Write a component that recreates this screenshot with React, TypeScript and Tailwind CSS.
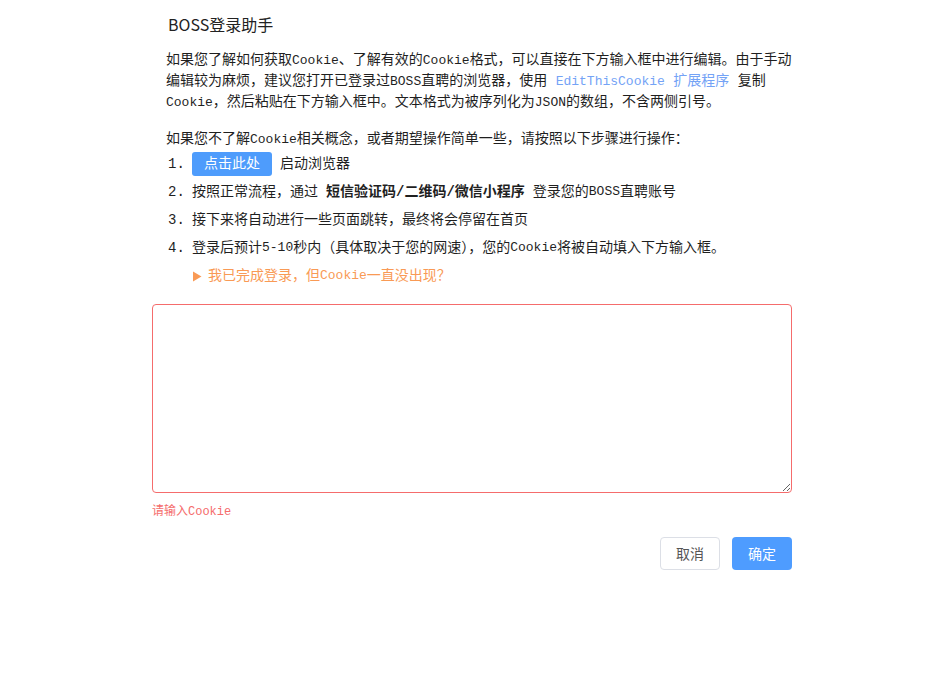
import type { ReactNode } from "react";

const mono = "font-['Liberation_Mono','Noto_Sans_CJK_SC',monospace]";

// latin runs in the reference are a touch narrower than the CJK glyphs
function L({ children }: { children: ReactNode }) {
  return <span className="text-[13px]">{children}</span>;
}

function Step({ n, children }: { n: number; children: ReactNode }) {
  return (
    <li className="flex h-[28px] items-center">
      <span className="w-6 shrink-0">{n}.</span>
      <div className="flex items-center">{children}</div>
    </li>
  );
}

export default function App() {
  return (
    <div className="h-[681px] w-full bg-white">
      <div className={`mx-auto w-[640px] text-[14px] text-[#1f1f1f] ${mono}`}>
        <h1 className="pl-4 pt-3 text-[16px] leading-6 font-normal font-['Noto_Sans_CJK_SC','Noto_Sans',sans-serif] text-[#222]">
          BOSS登录助手
        </h1>

        <p className="mt-[14px] pl-[14px] leading-[21px]">
          如果您了解如何获取<L>Cookie</L>、了解有效的<L>Cookie</L>格式，可以直接在下方输入框中进行编辑。由于手动编辑较为麻烦，建议您打开已登录过<L>BOSS</L>直聘的浏览器，使用{" "}
          <a className="cursor-pointer text-[#74a3f6]">
            <L>EditThisCookie</L> 扩展程序
          </a>{" "}
          复制<L>Cookie</L>，然后粘贴在下方输入框中。文本格式为被序列化为<L>JSON</L>的数组，不含两侧引号。
        </p>

        <p className="mt-4 pl-[14px] leading-[21px]">
          如果您不了解<L>Cookie</L>相关概念，或者期望操作简单一些，请按照以下步骤进行操作：
        </p>

        <ol className="pl-4">
          <Step n={1}>
            <button className="mr-2 h-[24px] w-[80px] rounded-[3px] bg-[#4e9cfc] text-[14px] text-white">
              点击此处
            </button>
            启动浏览器
          </Step>
          <Step n={2}>
            按照正常流程，通过 <b className="mx-2 font-bold">短信验证码/二维码/微信小程序</b> 登录您的<L>BOSS</L>直聘账号
          </Step>
          <Step n={3}>接下来将自动进行一些页面跳转，最终将会停留在首页</Step>
          <Step n={4}>
            登录后预计<L>5-10</L>秒内（具体取决于您的网速），您的<L>Cookie</L>将被自动填入下方输入框。
          </Step>
          <li className="flex h-[28px] items-center pl-6 text-[#f99a55]">
            <svg width="10" height="11" viewBox="0 0 10 11" className="mr-[6px]">
              <path d="M1 0.5 L9.5 5.5 L1 10.5 Z" fill="#f99a55" />
            </svg>
            我已完成登录，但<L>Cookie</L>一直没出现？
          </li>
        </ol>

        <textarea className="mt-[14px] block h-[189px] w-full resize-y rounded-[4px] border border-[#f56c6c] px-3 py-2 outline-none" />
        <div className="mt-3 text-[12px] leading-[14px] text-[#f56c6c]">
          请输入<span className="text-[12px]">Cookie</span>
        </div>

        <div className="mt-[18px] flex justify-end gap-3 font-['Noto_Sans_CJK_SC',sans-serif]">
          <button className="h-[33px] w-[60px] rounded-[4px] border border-[#dcdfe6] bg-white text-[14px] text-[#555]">
            取消
          </button>
          <button className="h-[33px] w-[60px] rounded-[4px] bg-[#4e9cff] text-[14px] text-white">
            确定
          </button>
        </div>
      </div>
    </div>
  );
}
